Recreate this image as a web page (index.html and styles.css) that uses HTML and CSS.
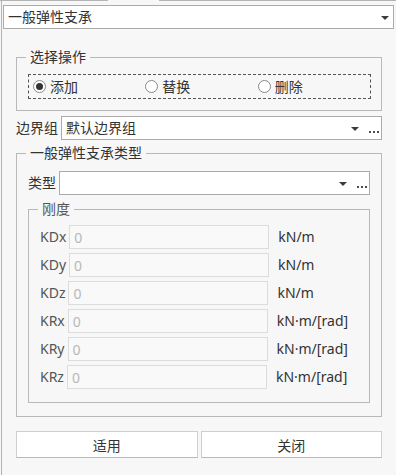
FILE: index.html
```html
<!DOCTYPE html>
<html lang="zh-CN">
<head>
    <meta charset="UTF-8">
    <title>一般弹性支承</title>
    <link rel="stylesheet" href="styles.css">
</head>
<body>
    <div class="tabline">
        <span class="tabline-seg tabline-left"></span>
        <span class="tabline-gap"></span>
        <span class="tabline-seg tabline-right"></span>
    </div>

    <div class="panel">
        <div class="combo combo-top">
            <span class="combo-text">一般弹性支承</span>
            <span class="combo-arrow"></span>
        </div>

        <div class="content">
            <fieldset class="group group-op">
                <legend>选择操作</legend>
                <div class="radio-box">
                    <label class="radio-item"><span class="radio checked"></span>添加</label>
                    <label class="radio-item"><span class="radio"></span>替换</label>
                    <label class="radio-item"><span class="radio"></span>删除</label>
                </div>
            </fieldset>

            <div class="field-row boundary-row">
                <span class="field-label">边界组</span>
                <div class="combo">
                    <span class="combo-text">默认边界组</span>
                    <span class="combo-arrow"></span>
                    <span class="combo-dots"><i></i><i></i><i></i></span>
                </div>
            </div>

            <fieldset class="group group-type">
                <legend>一般弹性支承类型</legend>

                <div class="field-row">
                    <span class="field-label">类型</span>
                    <div class="combo">
                        <span class="combo-text"></span>
                        <span class="combo-arrow"></span>
                        <span class="combo-dots"><i></i><i></i><i></i></span>
                    </div>
                </div>

                <fieldset class="group group-stiff">
                    <legend>刚度</legend>
                    <div class="stiff-row"><span class="stiff-label">KDx</span><input class="stiff-input" value="0" disabled><span class="stiff-unit">kN/m</span></div>
                    <div class="stiff-row"><span class="stiff-label">KDy</span><input class="stiff-input" value="0" disabled><span class="stiff-unit">kN/m</span></div>
                    <div class="stiff-row"><span class="stiff-label">KDz</span><input class="stiff-input" value="0" disabled><span class="stiff-unit">kN/m</span></div>
                    <div class="stiff-row"><span class="stiff-label">KRx</span><input class="stiff-input" value="0" disabled><span class="stiff-unit">kN·m/[rad]</span></div>
                    <div class="stiff-row"><span class="stiff-label">KRy</span><input class="stiff-input" value="0" disabled><span class="stiff-unit">kN·m/[rad]</span></div>
                    <div class="stiff-row"><span class="stiff-label">KRz</span><input class="stiff-input" value="0" disabled><span class="stiff-unit">kN·m/[rad]</span></div>
                </fieldset>
            </fieldset>

            <div class="buttons">
                <button type="button">适用</button>
                <button type="button">关闭</button>
            </div>
        </div>
    </div>
</body>
</html>
```

FILE: styles.css
```css
body {
    margin: 0;
    background-color: #f7f7f7;
    color: #333;
    font-family: "Noto Sans", "Noto Sans CJK SC", sans-serif;
    font-size: 14px;
    line-height: 16px;
    height: 475px;
    overflow: hidden;
}

/* Top tab strip edge */
.tabline {
    display: flex;
    height: 1px;
}

.tabline-seg {
    background-color: #b4b4b4;
}

.tabline-left {
    width: 108px;
}

.tabline-gap {
    width: 51px;
}

.tabline-right {
    flex: 1;
}

.panel {
    margin-left: 1px;
    border-left: 1px solid #b4b4b4;
    padding: 4px 2px 0 1px;
    height: 470px;
}

/* Combo boxes */
.combo {
    display: flex;
    align-items: center;
    height: 22px;
    border: 1px solid #ababab;
    background-color: #fff;
    padding: 0 2px 0 4px;
    flex: 1;
}

.combo-top {
    padding-right: 4px;
}

.combo-text {
    flex: 1;
}

.combo-arrow {
    width: 0;
    height: 0;
    border-left: 4px solid transparent;
    border-right: 4px solid transparent;
    border-top: 4px solid #3c3c3c;
    margin-top: 1px;
}

.combo-dots {
    display: flex;
    gap: 2px;
    margin-left: 10px;
    margin-top: 7px;
}

.combo-dots i {
    width: 2px;
    height: 2px;
    background-color: #4a4f60;
}

.content {
    margin: 0 12px 0 13px;
}

/* Group boxes */
.group {
    margin: 0;
    border: 1px solid #b9b9b9;
    padding: 0 10px 11px 11px;
    min-width: 0;
}

.group legend {
    padding: 0 4px;
    margin-left: -2px;
    line-height: 16px;
}

.group-op {
    margin-top: 20px;
    padding-top: 9px;
}

.radio-box {
    display: flex;
    height: 23px;
    align-items: center;
    border: 1px dashed #555;
    padding-left: 4px;
}

.radio-item {
    display: flex;
    align-items: center;
    width: 113px;
    gap: 4px;
}

.radio {
    box-sizing: border-box;
    width: 13px;
    height: 13px;
    border: 1px solid #8a8a8a;
    border-radius: 50%;
    background-color: #fff;
    display: flex;
    align-items: center;
    justify-content: center;
}

.radio.checked::after {
    content: "";
    width: 7px;
    height: 7px;
    border-radius: 50%;
    background-color: #333;
}

.field-row {
    display: flex;
    align-items: center;
    gap: 3px;
}

.boundary-row {
    margin-top: 5px;
}

.group-type {
    margin-top: 5px;
    padding: 10px 11px 13px 11px;
}

.group-stiff {
    margin-top: 6px;
    padding: 8px 11px 13px 11px;
    color: #555;
}

.stiff-row {
    display: flex;
    align-items: center;
    gap: 3px;
    height: 24px;
}

.stiff-row + .stiff-row {
    margin-top: 4px;
}

.stiff-input {
    box-sizing: border-box;
    width: 200px;
    height: 24px;
    margin: 0;
    border: 1px solid #dcdcdc;
    background-color: #f9f9f9;
    padding: 0 4px;
    font-family: "Noto Sans", sans-serif;
    font-size: 14px;
    color: #b8b8b8;
}

.stiff-unit {
    margin-left: 6px;
    color: #333;
}

/* Bottom buttons */
.buttons {
    display: flex;
    gap: 3px;
    margin-top: 14px;
}

.buttons button {
    flex: 1;
    height: 27px;
    margin: 0;
    background-color: #fff;
    border: 1px solid #cfcfcf;
    border-bottom-color: #b9b9b9;
    font-family: "Noto Sans CJK SC", sans-serif;
    font-size: 14px;
    color: #333;
    padding: 0;
}
```
